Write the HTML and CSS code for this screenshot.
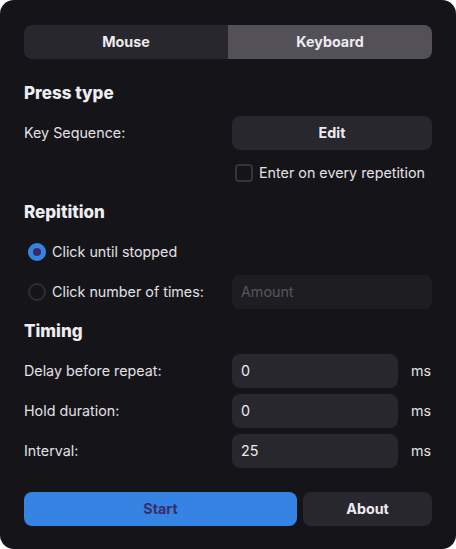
FILE: index.html
```html
<!DOCTYPE html>
<html>
<head>
<meta charset="utf-8">
<link rel="stylesheet" href="styles.css">
</head>
<body>
<div class="window">
  <div class="tabs">
    <div class="tab">Mouse</div>
    <div class="tab active">Keyboard</div>
  </div>

  <div class="section press">
    <h2 class="heading">Press type</h2>
    <div class="row">
      <span class="label">Key Sequence:</span>
      <button class="btn field">Edit</button>
    </div>
    <div class="row check-row">
      <span class="label"></span>
      <label class="check"><span class="box"></span>Enter on every repetition</label>
    </div>
  </div>

  <div class="section">
    <h2 class="heading">Repitition</h2>
    <div class="row">
      <label class="radio"><span class="dot on"></span>Click until stopped</label>
    </div>
    <div class="row">
      <label class="radio"><span class="dot"></span>Click number of times:</label>
      <div class="input field placeholder">Amount</div>
    </div>
  </div>

  <div class="section">
    <h2 class="heading">Timing</h2>
    <div class="row">
      <span class="label">Delay before repeat:</span>
      <div class="unit-field"><div class="input">0</div><span class="unit">ms</span></div>
    </div>
    <div class="row">
      <span class="label">Hold duration:</span>
      <div class="unit-field"><div class="input">0</div><span class="unit">ms</span></div>
    </div>
    <div class="row">
      <span class="label">Interval:</span>
      <div class="unit-field"><div class="input">25</div><span class="unit">ms</span></div>
    </div>
  </div>

  <div class="actions">
    <button class="btn start">Start</button>
    <button class="btn about">About</button>
  </div>
</div>
</body>
</html>
```

FILE: styles.css
```css
* { box-sizing: border-box; }
html, body { margin: 0; padding: 0; background: #ffffff; }
body { font-family: "Inter", "Noto Sans", sans-serif; }

.window {
  width: 456px;
  height: 549px;
  background: #151419;
  border-radius: 14px;
  padding: 25px 24px 23px;
  color: #e2e0e6;
  font-size: 14.3px;
  display: flex;
  flex-direction: column;
}

.tabs {
  display: flex;
  height: 34px;
  border-radius: 8px;
  overflow: hidden;
}
.tab {
  flex: 1;
  display: flex;
  align-items: center;
  justify-content: center;
  background: #28272d;
  font-weight: 700;
  color: #ecebf0;
  padding-bottom: 1px;
}
.tab.active { background: #535157; }

.section {
  display: flex;
  flex-direction: column;
  gap: 6px;
  margin-top: 12px;
}
.press { margin-top: 24px; }

.heading {
  margin: 0 0 7px;
  font-size: 17px;
  line-height: 20px;
  font-weight: 800;
  color: #eeedf1;
}

.row {
  display: flex;
  align-items: center;
  height: 34px;
}
.row > .label, .row > .radio, .unit, .check, .input { padding-bottom: 1px; }
.label { width: 208px; flex: none; }

.field {
  width: 200px;
  height: 34px;
  border-radius: 8px;
}

.btn {
  border: none;
  font-family: inherit;
  font-size: 14.3px;
  font-weight: 700;
  color: #ecebf0;
  background: #28272d;
  border-radius: 8px;
  cursor: pointer;
  padding: 0 0 1px;
}

.check {
  display: flex;
  align-items: center;
  gap: 6px;
  margin-left: 3px;
}
.box {
  width: 18px;
  height: 18px;
  border: 2px solid #34333a;
  border-radius: 4px;
}

.radio {
  display: flex;
  align-items: center;
  gap: 6px;
  width: 208px;
  padding-left: 4px;
  flex: none;
}
.dot {
  width: 18px;
  height: 18px;
  border-radius: 50%;
  border: 2px solid #2e2d33;
  display: flex;
  align-items: center;
  justify-content: center;
}
.dot.on {
  background: #3584e4;
  border-color: #3584e4;
}
.dot.on::after {
  content: "";
  width: 8px;
  height: 8px;
  border-radius: 50%;
  background: #3a2b63;
}

.input {
  height: 34px;
  display: flex;
  align-items: center;
  padding-left: 9px;
  background: #28272d;
  border-radius: 8px;
  color: #ecebf0;
}
.input.placeholder {
  background: #1e1d22;
  color: #58575d;
}

.unit-field {
  display: flex;
  align-items: center;
  width: 200px;
}
.unit-field .input { width: 166px; }
.unit { margin-left: 13px; }

.actions {
  display: flex;
  gap: 6px;
  margin-top: auto;
  height: 34px;
}
.start {
  flex: none;
  width: 273px;
  background: #3584e4;
  color: #3a2b6b;
}
.about { flex: 1; }
```
